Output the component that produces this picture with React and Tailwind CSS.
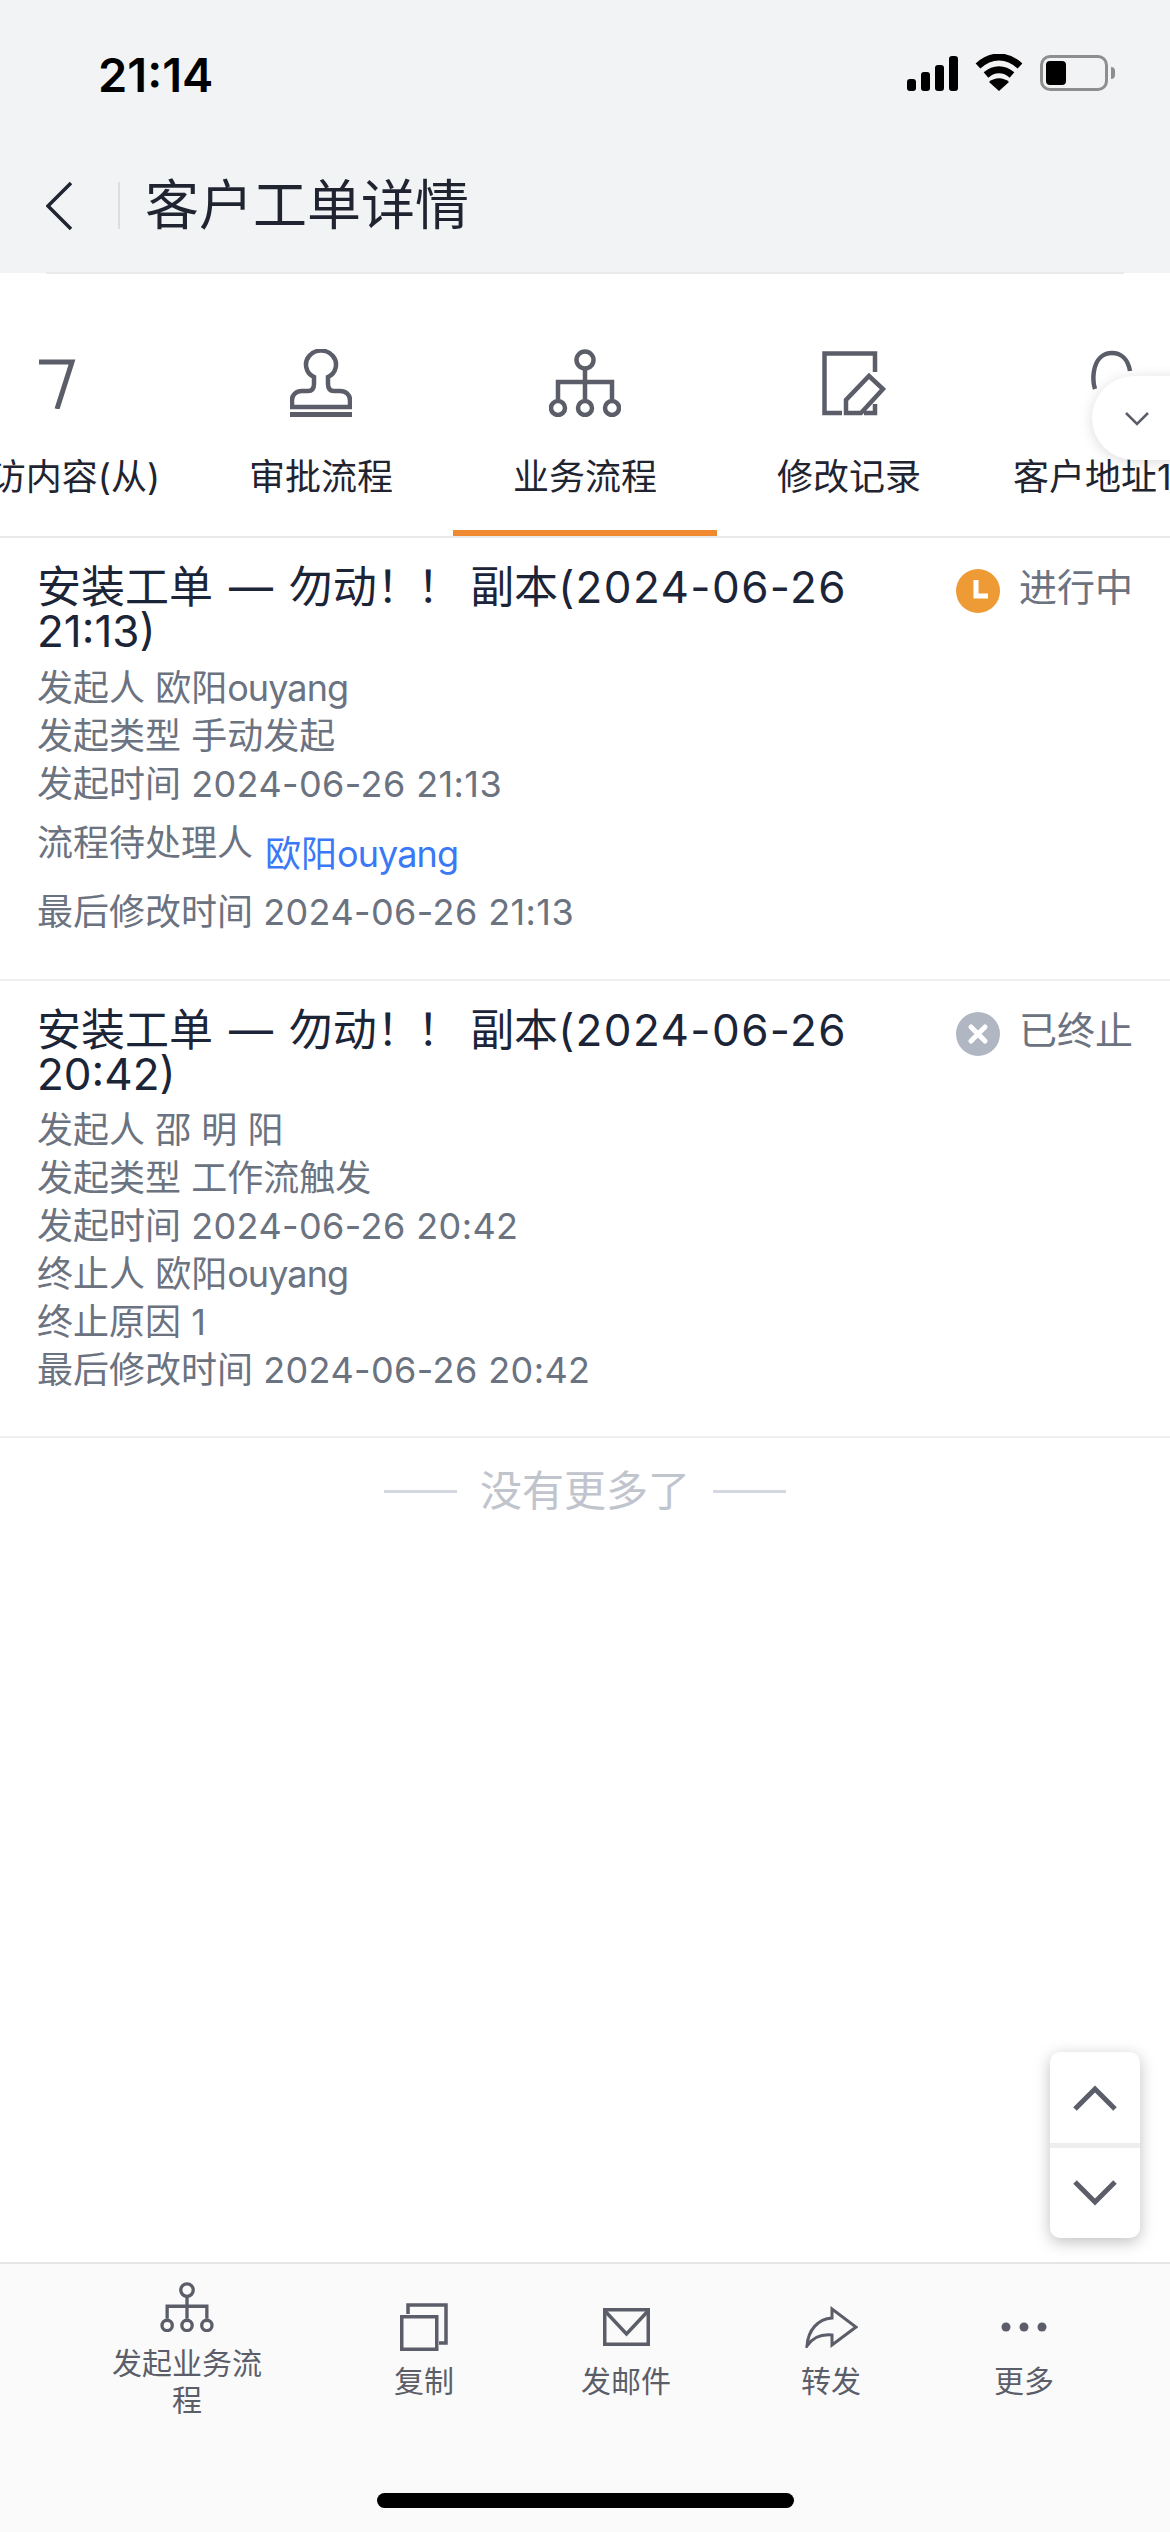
const FONT = "font-['Inter','Noto_Sans_CJK_SC',sans-serif]";

const StampIcon = () => (
  <svg width="62" height="68" viewBox="0 0 62 68" fill="none" stroke="#5b5e69" strokeWidth="4.5">
    <path d="M24 28 A15 14 0 1 1 38 28 V35 C38 40 40 42 44 42 H50 C56 42 60 46 60 51 V58 H2 V51 C2 46 6 42 12 42 H18 C22 42 24 40 24 35 Z" />
    <rect x="0" y="63" width="62" height="5" fill="#5b5e69" stroke="none" />
  </svg>
);

const OrgIcon = ({ w = 72, h = 68 }) => (
  <svg width={w} height={h} viewBox="0 0 72 68" fill="none" stroke="#5b5e69" strokeWidth="4.5">
    <circle cx="36" cy="11" r="8.5" />
    <path d="M36 20 V33 M9 50 V33 H63 V50 M36 33 V50" />
    <circle cx="9" cy="59" r="7" />
    <circle cx="36" cy="59" r="7" />
    <circle cx="63" cy="59" r="7" />
  </svg>
);

const EditIcon = () => (
  <svg width="64" height="66" viewBox="0 0 64 66" fill="none" stroke="#5b5e69" strokeWidth="4.5">
    <path d="M53 21 V2.5 H2.5 V62 H20" />
    <path d="M42 62 H53 V53" />
    <path d="M24 62 V49 L47 25 L61 38 L39 62 Z" />
  </svg>
);

const PinIcon = () => (
  <svg width="44" height="68" viewBox="0 0 44 68" fill="none" stroke="#5b5e69" strokeWidth="4.5">
    <path d="M4 40 C2 34 2 28 3 22 C5 10 12 4 21 4 C30 4 37 10 39 22" />
  </svg>
);

const ClippedIcon = () => (
  <svg width="40" height="52" viewBox="0 0 40 52" fill="none" stroke="#5b5e69" strokeWidth="5">
    <path d="M2 5 H35 L20 52" />
  </svg>
);

const tabs = [
  { label: '回访内容(从)', icon: <ClippedIcon />, iconClass: 'pb-[8px]' },
  { label: '审批流程', icon: <StampIcon /> },
  { label: '业务流程', icon: <OrgIcon />, active: true },
  { label: '修改记录', icon: <EditIcon />, iconClass: 'ml-[10px]' },
  { label: '客户地址1', icon: <PinIcon />, last: true },
];

const Row = ({ children }) => <div className="h-[48px] text-[36px] leading-[48px] text-[#6b7280] whitespace-nowrap">{children}</div>;

// latin runs sit a bit differently from the CJK font in the screenshot
const Name = ({ children }) => <span className="tracking-[-0.9px]">{children}</span>;
const Stamp = ({ children }) => <span className="tracking-[0.4px]">{children}</span>;

const ClockBadge = () => (
  <svg width="44" height="44" viewBox="0 0 44 44">
    <circle cx="22" cy="22" r="22" fill="#ee9a35" />
    <path d="M20 11 V27 H32" fill="none" stroke="#fff" strokeWidth="5" />
  </svg>
);

const StopBadge = () => (
  <svg width="44" height="44" viewBox="0 0 44 44">
    <circle cx="22" cy="22" r="22" fill="#b0b7c3" />
    <path d="M15 15 L29 29 M29 15 L15 29" fill="none" stroke="#fff" strokeWidth="5" strokeLinecap="round" />
  </svg>
);

const Title = ({ time, badge, status }) => (
  <div className="flex justify-between">
    <div className="w-[830px] text-[44px] leading-[44px] text-[#1c2438]">
      安装工单 <span className="mx-[3.5px]">—</span> 勿动<span className="tracking-[-3.5px]">！！</span> 副本<span className="tracking-[1.4px]">(2024-06-26</span> {time})
    </div>
    <div className="flex items-start">
      <div className="mt-[4px]">{badge}</div>
      <span className="ml-[19px] text-[38px] leading-[44px] text-[#6b7280] whitespace-nowrap">{status}</span>
    </div>
  </div>
);

const CopyIcon = () => (
  <svg width="48" height="48" viewBox="0 0 48 48" fill="none" stroke="#5b5e69" strokeWidth="3.5">
    <rect x="1.75" y="13.75" width="35" height="32.5" />
    <path d="M8 11 V2 H46 V40 H39" />
  </svg>
);

const MailIcon = () => (
  <svg width="47" height="38" viewBox="0 0 47 38" fill="none" stroke="#5b5e69" strokeWidth="3.5">
    <rect x="1.75" y="1.75" width="43.5" height="34.5" />
    <path d="M2 3 L23.5 26 L45 3" />
  </svg>
);

const ForwardIcon = () => (
  <svg width="53" height="42" viewBox="0 0 53 42" fill="none" stroke="#5b5e69" strokeWidth="3" strokeLinejoin="miter">
    <path d="M27 3 L51 21 L27 39 V29 C16 28 8 31 2 40 C3 24 13 13 27 12 Z" />
  </svg>
);

const DotsIcon = () => (
  <svg width="46" height="10" viewBox="0 0 46 10" fill="#5b5e69">
    <circle cx="5" cy="5" r="4.5" />
    <circle cx="23" cy="5" r="4.5" />
    <circle cx="41" cy="5" r="4.5" />
  </svg>
);

const actions = [
  { label: '复制', icon: <CopyIcon />, cls: 'ml-[112px]' },
  { label: '发邮件', icon: <MailIcon />, cls: 'ml-[102px]' },
  { label: '转发', icon: <ForwardIcon />, cls: 'ml-[105px]' },
  { label: '更多', icon: <DotsIcon />, cls: 'ml-[93px]' },
];

export default function App() {
  return (
    <div className={`relative w-[1170px] h-[2532px] overflow-hidden bg-white flex flex-col ${FONT}`}>
      {/* status bar + title */}
      <div className="h-[273px] bg-[#f1f3f5] shrink-0">
        <div className="h-[140px] pt-[51px] pl-[98px] pr-[55px] flex justify-between items-start">
          <span className="text-[47px] leading-[47px] font-semibold text-black font-['Inter',sans-serif]">21:14</span>
          <div className="flex items-start mt-[3px]">
            <div className="flex items-end gap-[5px] h-[35px] mt-[2px]">
              <div className="w-[9px] h-[12px] rounded-[3px] bg-black" />
              <div className="w-[9px] h-[19px] rounded-[3px] bg-black" />
              <div className="w-[9px] h-[26px] rounded-[3px] bg-black" />
              <div className="w-[9px] h-[35px] rounded-[3px] bg-black" />
            </div>
            <svg className="ml-[17px]" width="48" height="37" viewBox="0 0 48 37" fill="none" stroke="#000" strokeWidth="7">
              <path d="M3 12 C16 0 32 0 45 12" />
              <path d="M11 21 C19 14 29 14 37 21" />
              <path d="M24 37 L14 28 C20 23 28 23 34 28 Z" fill="#000" stroke="none" />
            </svg>
            <div className="ml-[17px] mt-[1px] w-[68px] h-[36px] rounded-[10px] border-[3px] border-[#8e8e8e] p-[3px]">
              <div className="w-[20px] h-full rounded-[4px] bg-black" />
            </div>
            <div className="ml-[3px] mt-[13px] w-[4px] h-[12px] rounded-r-full bg-[#8e8e8e]" />
          </div>
        </div>
        <div className="flex items-center h-[133px] pb-[2px]">
          <svg className="ml-[46px]" width="26" height="48" viewBox="0 0 26 48" fill="none" stroke="#1f2430" strokeWidth="3.5">
            <path d="M25 1 L2 24 L25 47" />
          </svg>
          <div className="ml-[46px] w-[2px] h-[47px] bg-[#dcdee2]" />
          <h1 className="ml-[25px] text-[54px] leading-[60px] font-normal text-[#1f2430]">客户工单详情</h1>
        </div>
      </div>
      <div className="h-[2px] mx-[46px] -mt-[1px] bg-[#e9eaec] shrink-0" />

      {/* tabs */}
      <div className="flex shrink-0 -ml-[75px] w-[1400px] h-[262px]">
        {tabs.map((t) => (
          <div key={t.label} className={`w-[264px] h-full shrink-0 flex flex-col items-center pt-[75px] ${t.active ? 'border-b-[6px] border-[#f08a31]' : ''}`}>
            <div className={`h-[68px] flex items-end justify-center ${t.iconClass || ''}`}>{t.icon}</div>
            <div className={`mt-[38px] text-[36px] leading-[44px] text-[#1f2430] whitespace-nowrap ${t.last ? 'self-start ml-[32px]' : ''}`}>{t.label}</div>
          </div>
        ))}
      </div>
      <div className="h-[2px] bg-[#e8e9eb] shrink-0" />

      {/* records */}
      <div className="px-[37px] pt-[27px] pb-[43px] border-b-2 border-[#eeeff1]">
        <Title time="21:13" badge={<ClockBadge />} status="进行中" />
        <div className="mt-[11px]">
          <Row>发起人 欧阳<Name>ouyang</Name></Row>
          <Row>发起类型 手动发起</Row>
          <Row>发起时间 <Stamp>2024-06-26 21:13</Stamp></Row>
          <div className="flex items-start mt-[11px] h-[60px] text-[36px] leading-[48px] whitespace-nowrap">
            <span className="text-[#6b7280]">流程待处理人</span>
            <span className="ml-[12px] mt-[11px] text-[#3b78f5]">欧阳<Name>ouyang</Name></span>
          </div>
          <div className="mt-[9px]">
            <Row>最后修改时间 <Stamp>2024-06-26 21:13</Stamp></Row>
          </div>
        </div>
      </div>
      <div className="px-[37px] pt-[27px] pb-[42px] border-b-2 border-[#eeeff1]">
        <Title time="20:42" badge={<StopBadge />} status="已终止" />
        <div className="mt-[10px]">
          <Row>发起人 邵 明 阳</Row>
          <Row>发起类型 工作流触发</Row>
          <Row>发起时间 <Stamp>2024-06-26 20:42</Stamp></Row>
          <Row>终止人 欧阳<Name>ouyang</Name></Row>
          <Row>终止原因 1</Row>
          <Row>最后修改时间 <Stamp>2024-06-26 20:42</Stamp></Row>
        </div>
      </div>
      <div className="mt-[28px] flex justify-center items-center text-[#c0c4cc]">
        <div className="w-[73px] h-[3px] bg-[#d5d8e0]" />
        <span className="mx-[23px] text-[42px] leading-[50px]">没有更多了</span>
        <div className="w-[73px] h-[3px] bg-[#d5d8e0]" />
      </div>

      {/* bottom actions */}
      <div className="mt-auto h-[270px] shrink-0 border-t-2 border-[#e4e5e7] bg-[#fafafa] pl-[112px] flex items-start text-[30px] leading-[37px] text-[#5b5e69]">
        <div className="w-[150px] pt-[18px] flex flex-col items-center text-center">
          <OrgIcon w={54} h={50} />
          <div className="mt-[13px]">发起业务流程</div>
        </div>
        {actions.map((a) => (
          <div key={a.label} className={`w-[100px] pt-[39px] flex flex-col items-center ${a.cls}`}>
            <div className="h-[48px] flex items-center justify-center">{a.icon}</div>
            <div className="mt-[12px] whitespace-nowrap">{a.label}</div>
          </div>
        ))}
      </div>

      {/* overlays */}
      <div className="absolute left-[1092px] top-[376px] w-[120px] h-[84px] rounded-l-[42px] bg-white shadow-[0_2px_14px_rgba(0,0,0,0.14)] pl-[33px] pt-[36px]">
        <svg width="24" height="14" viewBox="0 0 24 14" fill="none" stroke="#5b5e69" strokeWidth="2.5">
          <path d="M1 1 L12 12 L23 1" />
        </svg>
      </div>
      <div className="absolute left-[1050px] top-[2052px] w-[90px] h-[186px] rounded-[10px] bg-white shadow-[0_4px_16px_rgba(0,0,0,0.25)] flex flex-col">
        <div className="h-[91px] flex items-center justify-center">
          <svg width="44" height="26" viewBox="0 0 44 26" fill="none" stroke="#5b5e69" strokeWidth="5">
            <path d="M2 24 L22 4 L42 24" />
          </svg>
        </div>
        <div className="h-[5px] bg-[#eeeeee]" />
        <div className="flex-1 flex items-center justify-center">
          <svg width="44" height="26" viewBox="0 0 44 26" fill="none" stroke="#5b5e69" strokeWidth="5">
            <path d="M2 2 L22 22 L42 2" />
          </svg>
        </div>
      </div>
      <div className="absolute left-[377px] top-[2493px] w-[417px] h-[15px] rounded-full bg-black" />
    </div>
  );
}
